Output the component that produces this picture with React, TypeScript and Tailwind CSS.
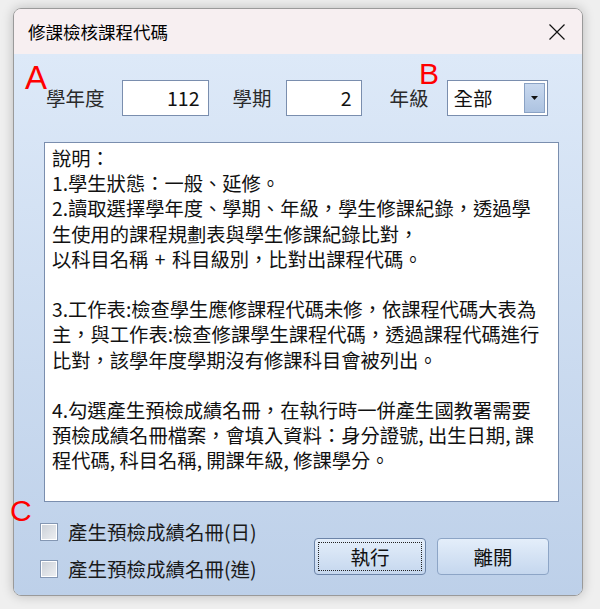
import React from 'react';

const cjk = "font-['Noto_Sans_CJK_TC','Noto_Sans',sans-serif]";

// three-per-em spaces keep the wider gaps around the plus sign
const lines = [
  '說明：',
  '1.學生狀態：一般、延修。',
  '2.讀取選擇學年度、學期、年級，學生修課紀錄，透過學',
  '生使用的課程規劃表與學生修課紀錄比對，',
  '以科目名稱\u2004+\u2004科目級別，比對出課程代碼。',
  '',
  '3.工作表:檢查學生應修課程代碼未修，依課程代碼大表為',
  '主，與工作表:檢查修課學生課程代碼，透過課程代碼進行',
  '比對，該學年度學期沒有修課科目會被列出。',
  '',
  '4.勾選產生預檢成績名冊，在執行時一併產生國教署需要',
  '預檢成績名冊檔案，會填入資料：身分證號, 出生日期, 課',
  '程代碼, 科目名稱, 開課年級, 修課學分。',
];

const Checkbox: React.FC<{ label: string }> = ({ label }) => (
  <label className="flex items-center h-[28px]">
    <span className="w-[18px] h-[18px] border border-[#8497b3] p-[1px] bg-white">
      <span className="block w-full h-full bg-gradient-to-br from-[#cdd2d9] to-[#eceef1]" />
    </span>
    <span className="ml-[10px] text-[19.5px] text-[#1a1a1a] leading-none whitespace-nowrap">{label}</span>
  </label>
);

export default function App() {
  return (
    <div className={`relative w-[600px] h-[609px] bg-[#efefef] pt-[8px] pl-[13px] ${cjk}`}>
      <div className="w-[570px] h-[588px] rounded-[8px] border border-[#9a9a9a] overflow-hidden flex flex-col shadow-[0_0_12px_rgba(0,0,0,0.22)]">
        {/* title bar */}
        <div className="h-[45px] bg-[#f7eff1] flex items-center justify-between pl-[14px] pr-[16px]">
          <span className="text-[17.5px] text-black leading-none">修課檢核課程代碼</span>
          <svg width="16" height="16" viewBox="0 0 16 16" className="mr-[1px]">
            <path d="M0.5 0.5 L15.5 15.5 M15.5 0.5 L0.5 15.5" stroke="#111" strokeWidth="1.2" />
          </svg>
        </div>

        {/* body */}
        <div className="flex-1 bg-gradient-to-b from-[#dde9f8] to-[#bdd0e9] pl-[26px] pr-[33px] flex flex-col items-start">
          <div className="mt-[26px] h-[36px] ml-[6px] flex items-center text-[19.5px] text-[#2a2a2a] whitespace-nowrap">
            <span className="shrink-0">學年度</span>
            <div className="shrink-0 ml-[17px] w-[87px] h-[36px] border border-[#7a8eae] bg-white flex items-center justify-end pr-[8px] text-[#111]">
              112
            </div>
            <span className="shrink-0 ml-[24px]">學期</span>
            <div className="shrink-0 ml-[14px] w-[76px] h-[36px] border border-[#7a8eae] bg-white flex items-center justify-end pr-[9px] text-[#111]">
              2
            </div>
            <span className="shrink-0 ml-[28px]">年級</span>
            <div className="shrink-0 ml-[18px] w-[101px] h-[36px] border border-[#7a8eae] bg-white flex items-center pl-[6px] pr-[2px] py-[2px]">
              <span className="flex-1 text-[#111]">全部</span>
              <div className="w-[21px] h-full border border-[#8aa2c4] bg-gradient-to-b from-[#c9d9ef] to-[#adc3e1] flex items-center justify-center">
                <svg width="7" height="4" viewBox="0 0 7 4">
                  <path d="M0 0 H7 L3.5 4 Z" fill="#111" />
                </svg>
              </div>
            </div>
          </div>

          <div className="mt-[26px] ml-[4px] w-[515px] h-[360px] border border-[#7a8eae] bg-white pl-[7px] pt-[3px] text-[19.3px] leading-[25.2px] text-[#111]">
            {lines.map((l, i) => (
              <div key={i} className="whitespace-pre h-[25.2px]">{l}</div>
            ))}
          </div>

          <div className="w-full flex items-start">
            <div className="mt-[16px] flex flex-col gap-[9px]">
              <Checkbox label="產生預檢成績名冊(日)" />
              <Checkbox label="產生預檢成績名冊(進)" />
            </div>
            <div className="ml-auto mt-[36px] flex gap-[11px]">
              <button className="w-[112px] h-[37px] rounded-[4px] border border-[#6c84a8] bg-gradient-to-b from-[#e4eefa] to-[#c5d7ee] p-[3px]">
                <span className="w-full h-full border border-dotted border-[#222] flex items-center justify-center text-[19.5px] text-[#111] leading-none">
                  執行
                </span>
              </button>
              <button className="w-[112px] h-[37px] rounded-[4px] border border-[#8da5c6] bg-gradient-to-b from-[#e4eefa] to-[#c5d7ee] flex items-center justify-center text-[19.5px] text-[#111] leading-none">
                離開
              </button>
            </div>
          </div>
        </div>
      </div>

      {/* red annotation letters */}
      <span className="absolute left-[25px] top-[61px] text-[33px] leading-none text-[#ff0000] font-['Liberation_Sans',sans-serif]">A</span>
      <span className="absolute left-[419px] top-[59px] text-[30px] leading-none text-[#ff0000] font-['Liberation_Sans',sans-serif]">B</span>
      <span className="absolute left-[10px] top-[496px] text-[30px] leading-none text-[#ff0000] font-['Liberation_Sans',sans-serif]">C</span>
    </div>
  );
}
